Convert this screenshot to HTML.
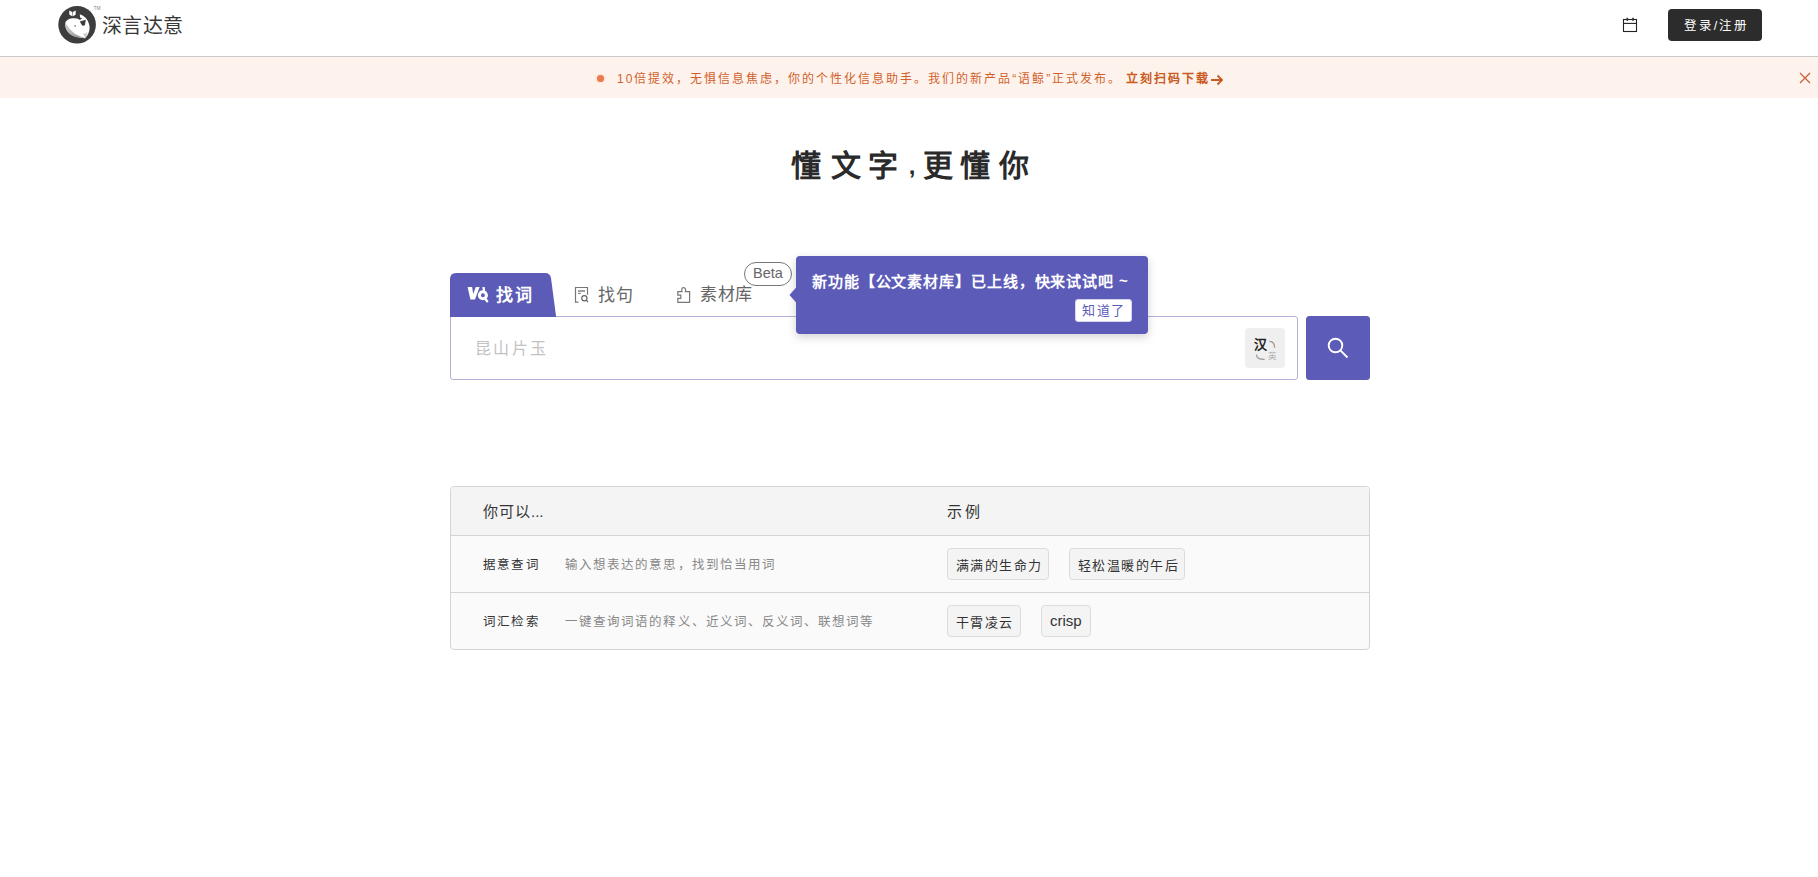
<!DOCTYPE html>
<html lang="zh-CN"><head><meta charset="utf-8">
<style>
*{box-sizing:border-box;margin:0;padding:0}
html,body{width:1818px;height:877px;overflow:hidden;background:#fff;font-family:"Liberation Sans",sans-serif;color:#333}
.a{position:absolute;white-space:nowrap}
</style></head><body>
<!-- header -->
<div class="a" style="left:0;top:0;width:1818px;height:57px;background:#fff;border-bottom:1px solid #c9c9c9"></div>
<svg class="a" style="left:52px;top:0" width="52" height="50" viewBox="0 0 52 50">
  <defs><linearGradient id="wg" x1="0.1" y1="0.3" x2="0.6" y2="1"><stop offset="0" stop-color="#bdbdbd"/><stop offset="1" stop-color="#8a8a8a"/></linearGradient></defs>
  <circle cx="25.1" cy="24.8" r="18.8" fill="#3d3d3d"/>
  <path d="M13.4 22.5 C14.5 19.5 18.5 18 22.5 18.2 C25 18.3 27 19 28.3 20.3 L27.8 14.2 C33 15.8 37 20.5 37.6 27 C37.9 31.5 36 35 33.2 38.2 C27 38 20 36.5 16 32 C13.6 29 12.8 25.5 13.4 22.5 Z" fill="#fff"/>
  <path d="M13.4 23 C13 27 14.5 31 17.5 34 C21 37 27 38 33.2 38.2 C30 37 26 36 22.5 33.5 C18.5 30.5 16 26.5 13.4 23 Z" fill="url(#wg)" opacity="0.85"/>
  <path d="M27.8 21.6 L33.8 19.8 L33 24.8 C32.3 26 31 26.2 30 25.2 Z" fill="#3d3d3d"/>
  <path d="M28 17.6 L30.3 18.4 L28.4 19.8 Z" fill="#3d3d3d"/>
  <path d="M31 33.5 C33 33.8 34.5 33 35.6 32 C35 34.5 34 36.5 33.2 38.2 Z" fill="#aaa" opacity="0.6"/>
  <path d="M17.2 10.4 L20.2 12 L20.4 16.2 L17.4 14.8 Z M20.8 12 L23.8 10.4 L23.6 14.8 L20.8 16.2 Z" fill="#fff"/>
  <circle cx="23.1" cy="25.9" r="0.75" fill="#444"/>
  <text x="41.5" y="10" font-size="5" fill="#888" font-family="Liberation Sans">TM</text>
</svg>
<div id="t_logo" class="a" style="left:102px;top:13px;font-size:20px;line-height:26px;letter-spacing:0.3px;font-weight:500;color:#383838">深言达意</div>
<svg class="a" style="left:1622px;top:17px" width="16" height="16" viewBox="0 0 16 16"><rect x="1.5" y="2.5" width="13" height="12" fill="none" stroke="#222" stroke-width="1.1"/><line x1="1.5" y1="6.4" x2="14.5" y2="6.4" stroke="#222" stroke-width="1.1"/><line x1="5.3" y1="0.8" x2="5.3" y2="3.8" stroke="#333" stroke-width="1.7"/><line x1="11" y1="0.8" x2="11" y2="3.8" stroke="#333" stroke-width="1.7"/></svg>
<div class="a" style="left:1668px;top:9px;width:94px;height:32px;background:#2c2c2c;border-radius:4px"></div>
<div id="t_login" class="a" style="left:1684px;top:16px;font-size:12.5px;line-height:20px;letter-spacing:1.9px;color:#fff">登录/注册</div>
<!-- banner -->
<div class="a" style="left:0;top:57px;width:1818px;height:41px;background:#fef3ec"></div>
<div class="a" style="left:596.5px;top:74.7px;width:7px;height:7px;border-radius:50%;background:#ec7a4a;box-shadow:0 0 2px rgba(236,122,74,.5)"></div>
<div id="t_banner" class="a" style="left:617px;top:69px;font-size:12px;line-height:20px;letter-spacing:2px;color:#d0612c">10倍提效，无惧信息焦虑，你的个性化信息助手。我们的新产品“语鲸”正式发布。</div>
<div id="t_link" class="a" style="left:1126px;top:69px;font-size:12px;line-height:20px;letter-spacing:2px;color:#c95a22;font-weight:bold">立刻扫码下载</div>
<svg class="a" style="left:1210px;top:73px" width="14" height="14" viewBox="0 0 14 14"><path d="M1 7 H12 M7.5 2.5 L12 7 L7.5 11.5" fill="none" stroke="#c95a22" stroke-width="1.8"/></svg>
<svg class="a" style="left:1798px;top:71px" width="14" height="14" viewBox="0 0 14 14"><path d="M2 2 L12 12 M12 2 L2 12" stroke="#c8603a" stroke-width="1.3"/></svg>
<!-- title -->
<div id="t_title" class="a" style="left:791px;top:146px;width:245px;height:40px;font-size:30px;line-height:40px;font-weight:bold;color:#2a2a2a"><span class="a" style="left:-0.1px;top:0">懂</span><span class="a" style="left:39.5px;top:0">文</span><span class="a" style="left:76.6px;top:0">字</span><span class="a" style="left:117.7px;top:0;font-size:24px">,</span><span class="a" style="left:131.9px;top:0">更</span><span class="a" style="left:169.0px;top:0">懂</span><span class="a" style="left:207.8px;top:0">你</span></div>
<!-- tabs -->
<svg class="a" style="left:450px;top:273px" width="106" height="43" viewBox="0 0 106 43"><path d="M0 43 L0 6 Q0 0 6 0 L95 0 Q100 0 101 5 L106 43 Z" fill="#5c5bb8"/></svg>
<div id="t_tab1" class="a" style="left:496px;top:285px;font-size:17px;line-height:22px;letter-spacing:2px;font-weight:900;color:#fff">找词</div>
<svg class="a" style="left:462px;top:280px" width="34" height="28" viewBox="0 0 34 28"><path d="M5.6 6.9 L10.1 6.9 L11.2 14 L13.8 6.9 L17.6 6.9 L13 19.5 L8.4 19.5 Z" fill="#fff"/><circle cx="20.9" cy="15.3" r="3.5" fill="none" stroke="#fff" stroke-width="3.1"/><path d="M20.4 6.9 L22.7 6.9 L23.2 12 L20.9 12 Z" fill="#fff"/><path d="M22.8 18.3 L25.2 21.3" stroke="#fff" stroke-width="2.4" stroke-linecap="round"/></svg>
<svg class="a" style="left:574px;top:286px" width="16" height="18" viewBox="0 0 16 18"><path d="M4.5 16.2 H1.5 V1.5 H13.5 V8.8" fill="none" stroke="#777" stroke-width="1.2"/><path d="M4 5 H11" stroke="#888" stroke-width="1.6"/><path d="M4 7.4 H7" stroke="#888" stroke-width="1.1"/><circle cx="10.4" cy="12.3" r="2.6" fill="none" stroke="#666" stroke-width="1.2"/><path d="M12.3 14.2 L14 16" stroke="#666" stroke-width="1.2"/></svg>
<div id="t_tab2" class="a" style="left:598px;top:285px;font-size:17px;line-height:22px;letter-spacing:1px;color:#666">找句</div>
<svg class="a" style="left:676px;top:286px" width="16" height="18" viewBox="0 0 16 18"><path d="M1.8 16.3 H13.6 V5.6 H9.4 C10.2 3.6 9.2 1.4 7.4 1.6 C5.6 1.8 5.4 4 6 5.6 H1.8 V9.2 H4.8 V12.4 H1.8 Z" fill="none" stroke="#777" stroke-width="1.2"/></svg>
<div id="t_tab3" class="a" style="left:700px;top:284px;font-size:17px;line-height:22px;letter-spacing:0.7px;color:#666">素材库</div>
<div class="a" style="left:744px;top:262px;width:48px;height:24px;border:1px solid #777;border-radius:12px;background:#fff"></div>
<div id="t_beta" class="a" style="left:753px;top:264px;font-size:14.5px;line-height:18px;color:#666">Beta</div>
<!-- input -->
<div class="a" style="left:450px;top:316px;width:848px;height:64px;border:1px solid #b3b1d8;border-radius:0 3px 3px 3px;background:#fff"></div>
<div class="a" style="left:450px;top:316px;width:106px;height:1px;background:#5c5bb8"></div>
<div id="t_ph" class="a" style="left:474.6px;top:338px;font-size:16px;line-height:22px;letter-spacing:2.6px;color:#c2c2c2">昆山片玉</div>
<div class="a" style="left:1245px;top:328px;width:40px;height:40px;background:#efefef;border-radius:4px"></div>
<div id="t_han" class="a" style="left:1254px;top:337px;font-size:13px;line-height:16px;font-weight:900;color:#222">汉</div>
<div id="t_ying" class="a" style="left:1268px;top:351px;font-size:8.5px;line-height:11px;color:#aaa">英</div>
<svg class="a" style="left:1245px;top:328px" width="40" height="40" viewBox="0 0 40 40"><path d="M24.4 13.4 Q29.6 13.4 29.6 19.8" fill="none" stroke="#999" stroke-width="1.2"/><path d="M11.4 26.4 Q11.4 31.3 19.6 31.3" fill="none" stroke="#999" stroke-width="1.2"/></svg>
<div class="a" style="left:1306px;top:316px;width:64px;height:64px;background:#5c5bb8;border-radius:3.5px"></div>
<svg class="a" style="left:1322px;top:332px" width="32" height="32" viewBox="0 0 32 32"><circle cx="13.5" cy="13.5" r="6.8" fill="none" stroke="#fff" stroke-width="1.9"/><path d="M18.4 18.4 L25.5 25.5" stroke="#fff" stroke-width="1.9"/></svg>
<!-- tooltip -->
<div class="a" style="left:796px;top:256px;width:352px;height:78px;background:#5c5bb8;border-radius:4px;box-shadow:0 3px 10px rgba(0,0,0,.18)"></div>
<svg class="a" style="left:788px;top:285px" width="10" height="20" viewBox="0 0 10 20"><path d="M9 1.5 L1.5 10 L9 18.5 Z" fill="#5c5bb8"/></svg>
<div id="t_tip" class="a" style="left:812px;top:271px;font-size:15px;line-height:22px;letter-spacing:0.9px;font-weight:bold;color:#fff">新功能【公文素材库】已上线，快来试试吧<span style="font-size:15px;letter-spacing:0;position:relative;top:-1px;margin-left:5px">~</span></div>
<div class="a" style="left:1075px;top:299px;width:57px;height:23px;background:#fff;border:1px solid #d6d5ee;border-radius:3px"></div>
<div id="t_know" class="a" style="left:1082px;top:301px;font-size:13px;line-height:20px;letter-spacing:1.7px;color:#5c5bb8">知道了</div>
<!-- table -->
<div class="a" style="left:450px;top:486px;width:920px;height:164px;border:1px solid #d4d4d4;border-radius:4px;background:#fafafa"></div>
<div class="a" style="left:451px;top:487px;width:918px;height:48px;background:#f4f4f4;border-radius:3px 3px 0 0"></div>
<div class="a" style="left:451px;top:535px;width:918px;height:1px;background:#d4d4d4"></div>
<div class="a" style="left:451px;top:592px;width:918px;height:1px;background:#d4d4d4"></div>
<div id="t_th1" class="a" style="left:483px;top:501px;font-size:15px;line-height:22px;letter-spacing:1px;color:#333">你可以<span style="letter-spacing:0">...</span></div>
<div id="t_th2" class="a" style="left:947px;top:501px;font-size:15px;line-height:22px;letter-spacing:2.5px;color:#333">示例</div>
<div id="t_r1" class="a" style="left:483px;top:555px;font-size:12.5px;line-height:20px;letter-spacing:1.2px;color:#333">据意查词</div>
<div id="t_d1" class="a" style="left:565px;top:555px;font-size:12.5px;line-height:20px;letter-spacing:1.07px;color:#888">输入想表达的意思，找到恰当用词</div>
<div class="a" style="left:947px;top:548px;width:102px;height:32px;border:1px solid #dcdcdc;border-radius:4px;background:#f4f4f4"></div>
<div id="t_c1" class="a" style="left:955.5px;top:555.5px;font-size:13px;line-height:20px;letter-spacing:1.5px;color:#333">满满的生命力</div>
<div class="a" style="left:1069px;top:548px;width:116px;height:32px;border:1px solid #dcdcdc;border-radius:4px;background:#f4f4f4"></div>
<div id="t_c2" class="a" style="left:1077.5px;top:555.5px;font-size:13px;line-height:20px;letter-spacing:1.5px;color:#333">轻松温暖的午后</div>
<div id="t_r2" class="a" style="left:483px;top:612px;font-size:12.5px;line-height:20px;letter-spacing:1.2px;color:#333">词汇检索</div>
<div id="t_d2" class="a" style="left:565px;top:612px;font-size:12.5px;line-height:20px;letter-spacing:1.07px;color:#888">一键查询词语的释义、近义词、反义词、联想词等</div>
<div class="a" style="left:947px;top:605px;width:74px;height:32px;border:1px solid #dcdcdc;border-radius:4px;background:#f4f4f4"></div>
<div id="t_c3" class="a" style="left:955.5px;top:612.5px;font-size:13px;line-height:20px;letter-spacing:1.5px;color:#333">干霄凌云</div>
<div class="a" style="left:1041px;top:605px;width:50px;height:32px;border:1px solid #dcdcdc;border-radius:4px;background:#f4f4f4"></div>
<div id="t_c4" class="a" style="left:1050px;top:611px;font-size:15px;line-height:20px;color:#333">crisp</div>
</body></html>
